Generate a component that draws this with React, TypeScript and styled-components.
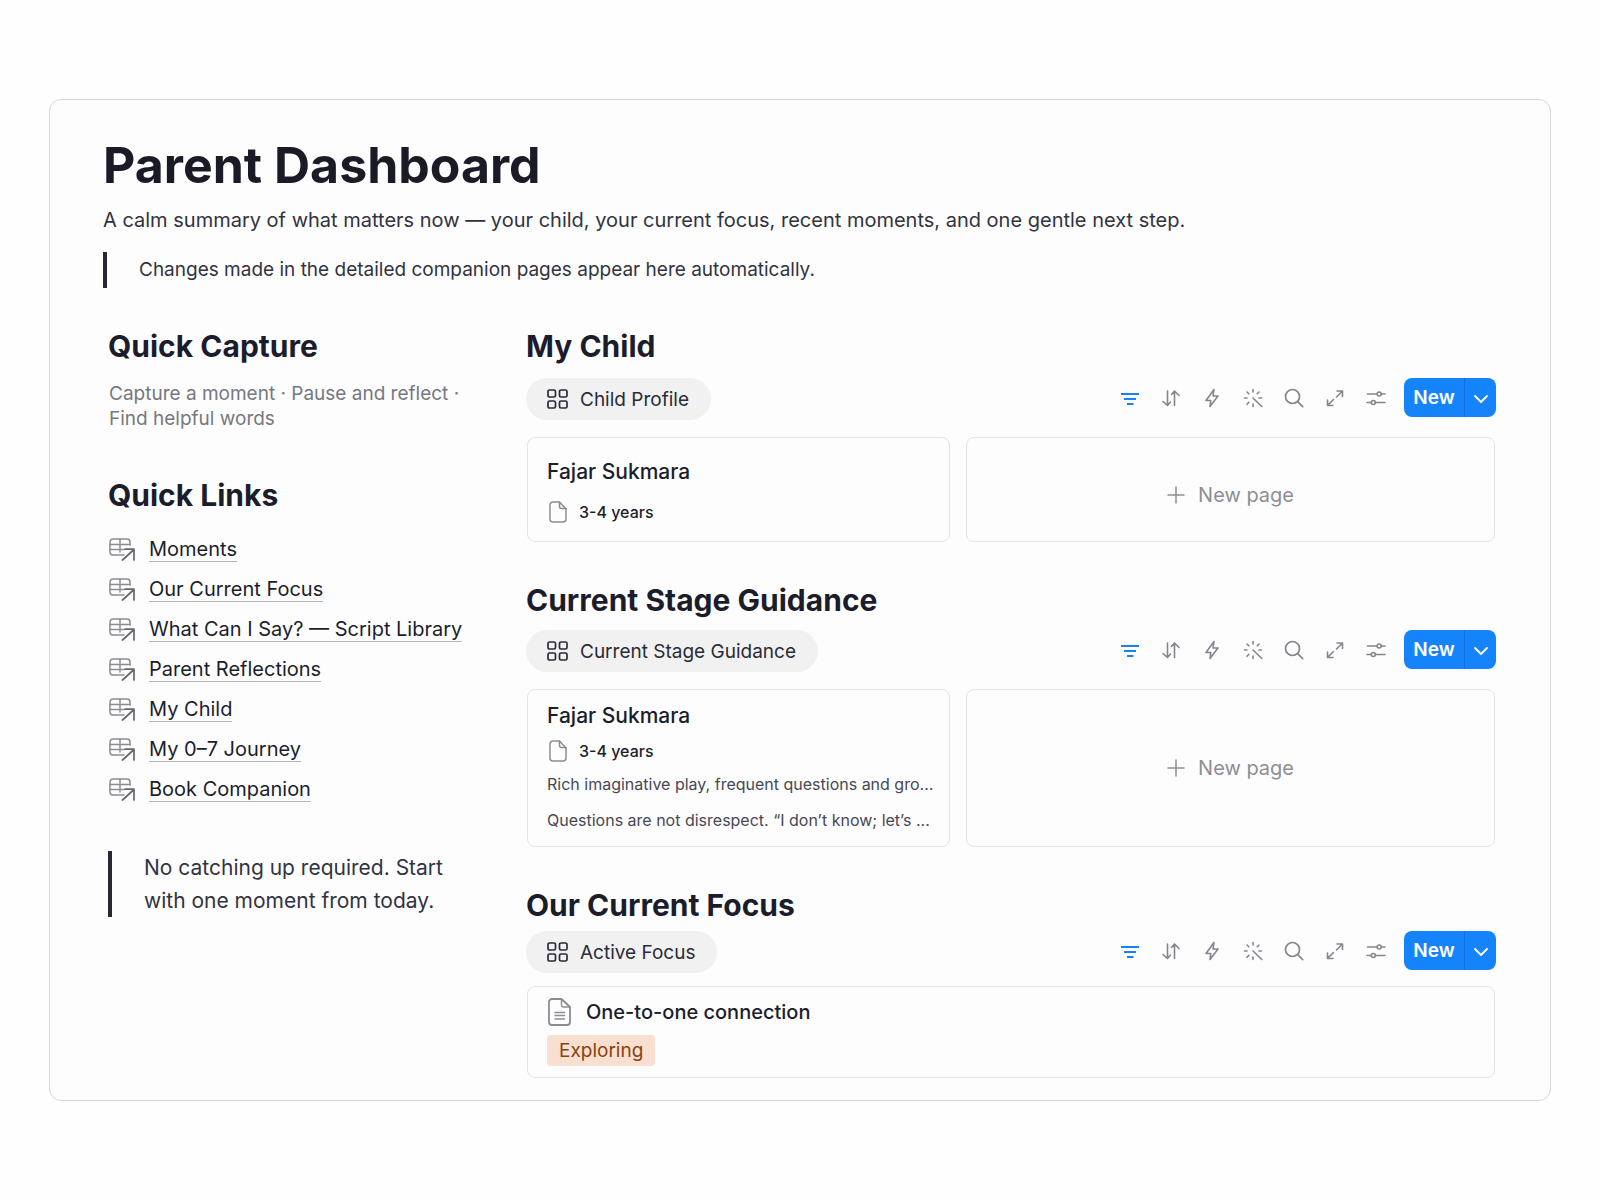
import React from "react";
import styled, { createGlobalStyle, css } from "styled-components";

const ink = "#1c1d2b";
const body = "#32333f";
const muted = "#77787f";
const faint = "#8d8e94";
const line = "#e4e4e7";
const blue = "#1584fb";

const GlobalStyle = createGlobalStyle`
  *, *::before, *::after { box-sizing: border-box; }
  body {
    margin: 0;
    background: #fefefe;
    color: ${ink};
    font-family: Inter, "Liberation Sans", sans-serif;
    font-size: 20px;
  }
  h1, h2, h3, p, ul, blockquote { margin: 0; padding: 0; }
  button { font: inherit; color: inherit; border: 0; background: none; padding: 0; cursor: pointer; }
`;

const Page = styled.div`
  padding: 99px 49px;
`;

const Frame = styled.main`
  padding: 35px 54px 22px 53px;
  border: 1px solid #d8d8db;
  border-radius: 12px;
  background: #fdfdfe;
`;

const Title = styled.h1`
  font-size: 50px;
  line-height: 60px;
  font-weight: 700;
  color: #1a1b27;
`;

const Subtitle = styled.p`
  margin-top: 10px;
  line-height: 30px;
  color: ${body};
`;

const Quote = styled.blockquote`
  margin-top: 17px;
  padding-left: 32px;
  border-left: 4px solid #272834;
  font-size: 19px;
  line-height: 36px;
  color: ${body};
`;

const AsideQuote = styled(Quote)`
  margin-top: 42px;
  font-size: 21px;
  line-height: 33px;
`;

const Columns = styled.div`
  display: grid;
  grid-template-columns: 377px minmax(0, 1fr);
  gap: 46px;
  margin-top: 38px;

  @media (max-width: 1100px) {
    grid-template-columns: minmax(0, 1fr);
  }
`;

const Aside = styled.aside`
  padding: 0 14px 0 5px;
`;

const Heading = styled.h2`
  font-size: 30px;
  line-height: 40px;
  font-weight: 700;
  color: ${ink};
`;

const Hint = styled.p`
  margin: 15px 0 44px;
  padding-left: 1px;
  font-size: 19px;
  line-height: 25px;
  color: ${muted};
`;

const LinkList = styled.ul`
  margin-top: 14px;
  list-style: none;
`;

const LinkItem = styled.li`
  display: flex;
  align-items: center;
  gap: 14px;
  height: 40px;
  padding-left: 1px;
`;

const PageLink = styled.a`
  line-height: 24px;
  color: ${ink};
  text-decoration: none;
  border-bottom: 1px solid #b4b4ba;
`;

const Sections = styled.div`
  display: flex;
  flex-direction: column;
  gap: 38px;
`;

const Toolbar = styled.div<{ $top: number }>`
  display: flex;
  align-items: flex-start;
  justify-content: space-between;
  margin-top: ${(p) => p.$top}px;
`;

const ViewTab = styled.button`
  display: flex;
  align-items: center;
  gap: 12px;
  height: 42px;
  padding: 0 22px 0 21px;
  border-radius: 21px;
  background: #f1f1f2;
  color: #2a2b37;
  font-size: 19px;
`;

const Tools = styled.div`
  display: flex;
  align-items: center;
  gap: 16px;
`;

const ToolGroup = styled.div`
  display: flex;
  gap: 17px;
`;

const ToolButton = styled.button<{ $active?: boolean }>`
  display: grid;
  place-items: center;
  width: 24px;
  height: 24px;
  color: ${(p) => (p.$active ? blue : "#85868c")};
`;

const SplitButton = styled.div`
  display: flex;
  height: 39px;
  border-radius: 8px;
  overflow: hidden;
  background: ${blue};
  color: #fff;
`;

const NewButton = styled.button`
  width: 61px;
  font-size: 19px;
  font-weight: 600;
  border-right: 1px solid #1270e0;
`;

const NewMenuButton = styled.button`
  display: grid;
  place-items: center;
  width: 31px;
`;

const Cards = styled.div<{ $tight?: boolean; $single?: boolean }>`
  display: grid;
  grid-template-columns: ${(p) => (p.$single ? "minmax(0, 1fr)" : "minmax(0, 4fr) minmax(0, 5fr)")};
  gap: 16px;
  margin-top: ${(p) => (p.$tight ? 13 : 17)}px;
  padding: 0 1px;
`;

const cardBox = css`
  border: 1px solid ${line};
  border-radius: 8px;
`;

const Card = styled.article<{ $pad: string }>`
  ${cardBox}
  padding: ${(p) => p.$pad};
`;

const NewPage = styled.button<{ $top: number }>`
  ${cardBox}
  display: flex;
  align-items: center;
  justify-content: center;
  gap: 13px;
  padding-top: ${(p) => p.$top}px;
  color: ${faint};
`;

const CardTitle = styled.h3`
  font-size: 21px;
  line-height: 28px;
  font-weight: 500;
`;

const DocTitle = styled(CardTitle)`
  display: flex;
  align-items: center;
  gap: 14px;
  font-size: 20px;
`;

const Meta = styled.p<{ $top: number }>`
  display: flex;
  align-items: center;
  gap: 12px;
  margin-top: ${(p) => p.$top}px;
  padding-left: 2px;
  font-size: 16px;
  line-height: 24px;
  font-weight: 500;
`;

const Excerpt = styled.p`
  margin-top: 9px;
  font-size: 16px;
  line-height: 24px;
  color: #474853;
  white-space: nowrap;

  & + & {
    margin-top: 12px;
  }
`;

const Tag = styled.span`
  display: inline-block;
  margin-top: 9px;
  padding: 0 12px;
  border-radius: 4px;
  background: #f8dfcf;
  font-size: 19px;
  line-height: 31px;
  color: #8a420f;
`;

const Svg = ({ w, h, sw = 1.6, children }: { w: number; h: number; sw?: number; children: React.ReactNode }) => (
  <svg
    width={w}
    height={h}
    viewBox={`0 0 ${w} ${h}`}
    fill="none"
    stroke="currentColor"
    strokeWidth={sw}
    strokeLinecap="round"
    strokeLinejoin="round"
    aria-hidden="true"
  >
    {children}
  </svg>
);

const TableLinkIcon = () => (
  <Svg w={26} h={23} sw={1.5}>
    <g stroke="#8c8d92">
      <path d="M21 7V4a3 3 0 0 0-3-3H4a3 3 0 0 0-3 3v10a3 3 0 0 0 3 3h11" />
      <path d="M1 6.500h20M1 11.500h14M11 1v13" />
    </g>
    <path stroke="#66676d" strokeWidth={1.7} d="M13.500 22 25 11.500M16 11.200h9V22" />
  </Svg>
);

const GridIcon = () => (
  <Svg w={21} h={20} sw={1.7}>
    <rect x="1" y="1" width="7.500" height="7" rx="1.600" />
    <rect x="12.500" y="1" width="7.500" height="7" rx="1.600" />
    <rect x="1" y="12" width="7.500" height="7" rx="1.600" />
    <rect x="12.500" y="12" width="7.500" height="7" rx="1.600" />
  </Svg>
);

const FilterIcon = () => (
  <Svg w={20} h={20} sw={2}>
    <path strokeLinecap="butt" d="M1 6h18M4 11h12M7 16h6.500" />
  </Svg>
);

const SortIcon = () => (
  <Svg w={20} h={20} sw={1.6}>
    <path d="M6.500 3v14.500M2 13.500l4.500 4L9.500 14M13.500 17.500V3M10.500 6.500 13.500 3 18 7.500" />
  </Svg>
);

const BoltIcon = () => (
  <Svg w={20} h={20} sw={1.6}>
    <path d="M12 1.500 4 12.500h4.800L8 18.500l8-10.500h-5z" />
  </Svg>
);

const WandIcon = () => (
  <Svg w={20} h={20} sw={1.6}>
    <path d="M10 1.500v2.500M10 16v2.500M1.500 10h2.500M16 10h2.500M4 4l1.800 1.800M16 4l-1.800 1.800M4 16.300l1.800-1.900M10 10l8.800 8.500" />
  </Svg>
);

const SearchIcon = () => (
  <Svg w={20} h={20} sw={1.7}>
    <circle cx="8.500" cy="8.500" r="7" />
    <path d="m13.700 13.700 5 5" />
  </Svg>
);

const ExpandIcon = () => (
  <Svg w={20} h={20} sw={1.6}>
    <path d="M12 3h5.500v5.500M17.500 3l-6 6M8 17.500H2.500V12M2.500 17.500l6-6" />
  </Svg>
);

const SlidersIcon = () => (
  <Svg w={20} h={20} sw={1.6}>
    <path d="M1.500 6h9.500M15.500 6h3.500M1 14.500h4M9.500 14.500H19" />
    <circle cx="13.200" cy="6" r="2" />
    <circle cx="7.300" cy="14.500" r="2" />
  </Svg>
);

const ChevronIcon = () => (
  <Svg w={16} h={16} sw={1.8}>
    <path d="m2 6 6 6 6-6" />
  </Svg>
);

const PlusIcon = () => (
  <Svg w={18} h={18} sw={1.5}>
    <path d="M9 1v16M1 9h16" />
  </Svg>
);

const PageIcon = () => (
  <Svg w={18} h={22} sw={1.5}>
    <g stroke="#8c8d92">
      <path d="M10.500 1H4a3 3 0 0 0-3 3v14a3 3 0 0 0 3 3h10a3 3 0 0 0 3-3V8z" />
      <path d="M10.500 1v4.500A2 2 0 0 0 12.500 7.500H17" />
    </g>
  </Svg>
);

const DocIcon = () => (
  <Svg w={25} h={28} sw={1.8}>
    <g stroke="#8c8d92">
      <path d="M14.500 1H5a3 3 0 0 0-3 3v20a3 3 0 0 0 3 3h15a3 3 0 0 0 3-3V9z" />
      <path d="M14.500 1v6a2 2 0 0 0 2 2H23M8 14.500h9.500M8 17.500h9.500M8 21h9.500" strokeWidth={1.4} />
    </g>
  </Svg>
);

const tools = [
  { label: "Filter", Icon: FilterIcon },
  { label: "Sort", Icon: SortIcon },
  { label: "Automations", Icon: BoltIcon },
  { label: "Autofill", Icon: WandIcon },
  { label: "Search", Icon: SearchIcon },
  { label: "Expand", Icon: ExpandIcon },
  { label: "View settings", Icon: SlidersIcon },
];

const links = [
  "Moments",
  "Our Current Focus",
  "What Can I Say? — Script Library",
  "Parent Reflections",
  "My Child",
  "My 0–7 Journey",
  "Book Companion",
];

const ViewBar = ({ view, top }: { view: string; top: number }) => (
  <Toolbar $top={top}>
    <ViewTab type="button">
      <GridIcon />
      {view}
    </ViewTab>
    <Tools>
      <ToolGroup>
        {tools.map(({ label, Icon }, i) => (
          <ToolButton key={label} type="button" aria-label={label} $active={i === 0}>
            <Icon />
          </ToolButton>
        ))}
      </ToolGroup>
      <SplitButton>
        <NewButton type="button">New</NewButton>
        <NewMenuButton type="button" aria-label="New options">
          <ChevronIcon />
        </NewMenuButton>
      </SplitButton>
    </Tools>
  </Toolbar>
);

const NewPageCard = ({ top = 0 }: { top?: number }) => (
  <NewPage type="button" $top={top}>
    <PlusIcon />
    New page
  </NewPage>
);

export default function App() {
  return (
    <Page>
      <GlobalStyle />
      <Frame>
        <header>
          <Title>Parent Dashboard</Title>
          <Subtitle>
            A calm summary of what matters now — your child, your current focus, recent moments, and one gentle next step.
          </Subtitle>
          <Quote>Changes made in the detailed companion pages appear here automatically.</Quote>
        </header>
        <Columns>
          <Aside>
            <Heading>Quick Capture</Heading>
            <Hint>Capture a moment · Pause and reflect · Find helpful words</Hint>
            <Heading>Quick Links</Heading>
            <LinkList>
              {links.map((label) => (
                <LinkItem key={label}>
                  <TableLinkIcon />
                  <PageLink href="#">{label}</PageLink>
                </LinkItem>
              ))}
            </LinkList>
            <AsideQuote>No catching up required. Start with one moment from today.</AsideQuote>
          </Aside>
          <Sections>
            <section>
              <Heading>My Child</Heading>
              <ViewBar view="Child Profile" top={12} />
              <Cards>
                <Card $pad="20px 19px 17px">
                  <CardTitle>Fajar Sukmara</CardTitle>
                  <Meta $top={14}>
                    <PageIcon />
                    3-4 years
                  </Meta>
                </Card>
                <NewPageCard top={10} />
              </Cards>
            </section>
            <section>
              <Heading>Current Stage Guidance</Heading>
              <ViewBar view="Current Stage Guidance" top={10} />
              <Cards>
                <Card $pad="12px 19px 14px">
                  <CardTitle>Fajar Sukmara</CardTitle>
                  <Meta $top={9}>
                    <PageIcon />
                    3-4 years
                  </Meta>
                  <Excerpt>Rich imaginative play, frequent questions and gro...</Excerpt>
                  <Excerpt>Questions are not disrespect. “I don’t know; let’s ...</Excerpt>
                </Card>
                <NewPageCard />
              </Cards>
            </section>
            <section>
              <Heading>Our Current Focus</Heading>
              <ViewBar view="Active Focus" top={6} />
              <Cards $single $tight>
                <Card $pad="11px 19px 11px">
                  <DocTitle>
                    <DocIcon />
                    One-to-one connection
                  </DocTitle>
                  <Tag>Exploring</Tag>
                </Card>
              </Cards>
            </section>
          </Sections>
        </Columns>
      </Frame>
    </Page>
  );
}
